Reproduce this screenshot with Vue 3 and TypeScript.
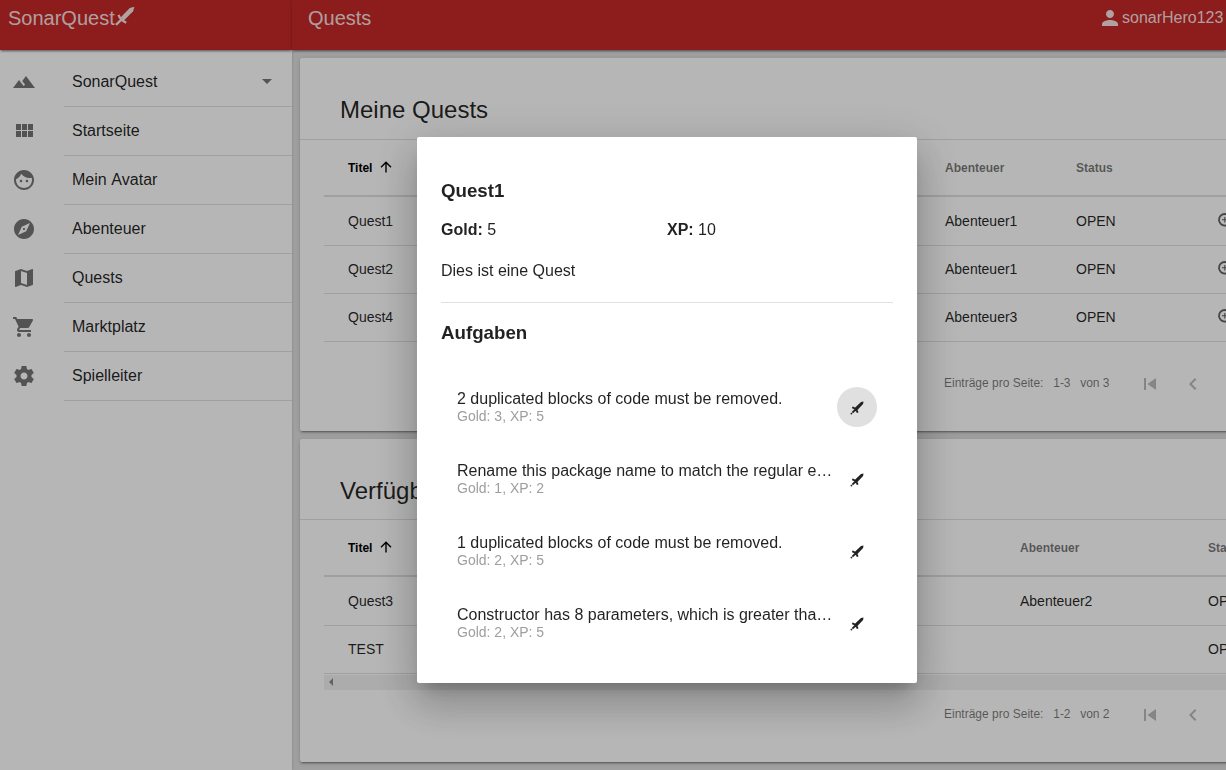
<script setup lang="ts">
interface NavItem { label: string; icon: string; select?: boolean }
interface Quest { title: string; adventure: string; status: string }
interface Task { title: string; gold: number; xp: number }

const nav: NavItem[] = [
  { label: 'SonarQuest', icon: 'M14 6l-3.75 5 2.85 3.8-1.6 1.2C9.81 13.75 7 10 7 10l-6 8h22L14 6z', select: true },
  { label: 'Startseite', icon: 'M4 11h5V5H4v6zm0 7h5v-6H4v6zm6 0h5v-6h-5v6zm6 0h5v-6h-5v6zm-6-7h5V5h-5v6zm6-6v6h5V5h-5z' },
  { label: 'Mein Avatar', icon: 'M9 11.75c-.69 0-1.25.56-1.25 1.25s.56 1.25 1.25 1.25 1.25-.56 1.25-1.25-.56-1.25-1.25-1.25zm6 0c-.69 0-1.25.56-1.25 1.25s.56 1.25 1.25 1.25 1.25-.56 1.25-1.25-.56-1.25-1.25-1.25zM12 2C6.48 2 2 6.48 2 12s4.48 10 10 10 10-4.48 10-10S17.52 2 12 2zm0 18c-4.41 0-8-3.59-8-8 0-.29.02-.58.05-.86 2.36-1.05 4.23-2.98 5.21-5.37C11.07 8.33 14.05 10 17.42 10c.78 0 1.53-.09 2.25-.26.21.71.33 1.47.33 2.26 0 4.41-3.59 8-8 8z' },
  { label: 'Abenteuer', icon: 'M12 10.9c-.61 0-1.1.49-1.1 1.1s.49 1.1 1.1 1.1c.61 0 1.1-.49 1.1-1.1s-.49-1.1-1.1-1.1zM12 2C6.48 2 2 6.48 2 12s4.48 10 10 10 10-4.48 10-10S17.52 2 12 2zm2.19 12.19L6 18l3.81-8.19L18 6l-3.81 8.19z' },
  { label: 'Quests', icon: 'M20.5 3l-.16.03L15 5.1 9 3 3.36 4.9c-.21.07-.36.25-.36.48V20.5c0 .28.22.5.5.5l.16-.03L9 18.9l6 2.1 5.64-1.9c.21-.07.36-.25.36-.48V3.5c0-.28-.22-.5-.5-.5zM15 19l-6-2.11V5l6 2.11V19z' },
  { label: 'Marktplatz', icon: 'M7 18c-1.1 0-1.99.9-1.99 2S5.9 22 7 22s2-.9 2-2-.9-2-2-2zM1 2v2h2l3.6 7.59-1.35 2.45c-.16.28-.25.61-.25.96 0 1.1.9 2 2 2h12v-2H7.42c-.14 0-.25-.11-.25-.25l.03-.12.9-1.63h7.45c.75 0 1.41-.41 1.75-1.03l3.58-6.49c.08-.14.12-.31.12-.48 0-.55-.45-1-1-1H5.21l-.94-2H1zm16 16c-1.1 0-1.99.9-1.99 2s.89 2 1.99 2 2-.9 2-2-.9-2-2-2z' },
  { label: 'Spielleiter', icon: 'M19.43 12.98c.04-.32.07-.64.07-.98s-.03-.66-.07-.98l2.11-1.65c.19-.15.24-.42.12-.64l-2-3.46c-.12-.22-.39-.3-.61-.22l-2.49 1c-.52-.4-1.08-.73-1.69-.98l-.38-2.65C14.46 2.18 14.25 2 14 2h-4c-.25 0-.46.18-.49.42l-.38 2.65c-.61.25-1.17.59-1.69.98l-2.49-1c-.23-.09-.49 0-.61.22l-2 3.46c-.13.22-.07.49.12.64l2.11 1.65c-.04.32-.07.65-.07.98s.03.66.07.98l-2.11 1.65c-.19.15-.24.42-.12.64l2 3.46c.12.22.39.3.61.22l2.49-1c.52.4 1.08.73 1.69.98l.38 2.65c.03.24.24.42.49.42h4c.25 0 .46-.18.49-.42l.38-2.65c.61-.25 1.17-.59 1.69-.98l2.49 1c.23.09.49 0 .61-.22l2-3.46c.12-.22.07-.49-.12-.64l-2.11-1.65zM12 15.5c-1.93 0-3.5-1.57-3.5-3.5s1.57-3.5 3.5-3.5 3.5 1.57 3.5 3.5-1.57 3.5-3.5 3.5z' },
]

const panels: { kind: string; title: string; range: string; total: number; scroll: boolean; rows: Quest[] }[] = [
  {
    kind: 'mine', title: 'Meine Quests', range: '1-3', total: 3, scroll: false,
    rows: [
      { title: 'Quest1', adventure: 'Abenteuer1', status: 'OPEN' },
      { title: 'Quest2', adventure: 'Abenteuer1', status: 'OPEN' },
      { title: 'Quest4', adventure: 'Abenteuer3', status: 'OPEN' },
    ],
  },
  {
    kind: 'available', title: 'Verfügbare Quests', range: '1-2', total: 2, scroll: true,
    rows: [
      { title: 'Quest3', adventure: 'Abenteuer2', status: 'OPEN' },
      { title: 'TEST', adventure: '', status: 'OPEN' },
    ],
  },
]

const tasks: Task[] = [
  { title: '2 duplicated blocks of code must be removed.', gold: 3, xp: 5 },
  { title: 'Rename this package name to match the regular expression', gold: 1, xp: 2 },
  { title: '1 duplicated blocks of code must be removed.', gold: 2, xp: 5 },
  { title: 'Constructor has 8 parameters, which is greater than 7 authorized.', gold: 2, xp: 5 },
]
</script>

<template>
  <div class="app">
    <aside class="side">
      <header class="bar brand">
        <span>SonarQuest</span>
        <svg class="logo" viewBox="0 0 20 20">
          <path d="M19.4 .7L14.8 2 5.8 11.2 9 14.4 18.1 5.3z" />
          <path class="hilt" d="M3.5 8.8Q5.2 13.6 11.2 16.8M6.6 13.4L1 18.8" />
        </svg>
      </header>
      <nav>
        <a v-for="item in nav" :key="item.label" class="nav-item">
          <svg class="icon" viewBox="0 0 24 24"><path :d="item.icon" /></svg>
          <span class="nav-label">{{ item.label }}<i v-if="item.select" class="caret"></i></span>
        </a>
      </nav>
    </aside>

    <main class="main">
      <header class="bar top">
        <span>Quests</span>
        <span class="user">
          <svg class="icon" viewBox="0 0 24 24"><path d="M12 12c2.21 0 4-1.79 4-4s-1.79-4-4-4-4 1.79-4 4 1.79 4 4 4zm0 2c-2.67 0-8 1.34-8 4v2h16v-2c0-2.66-5.33-4-8-4z" /></svg>
          sonarHero123
        </span>
      </header>

      <div class="cards">
        <section v-for="panel in panels" :key="panel.kind" class="card" :class="panel.kind">
          <h2>{{ panel.title }}</h2>
          <div class="table">
            <div class="row head">
              <span class="sorted">Titel
                <svg viewBox="0 0 12 12"><path d="M6 11.5V1.2M1 6.2L6 1.2l5 5" /></svg>
              </span>
              <span>Abenteuer</span>
              <span>Status</span>
            </div>
            <div v-for="row in panel.rows" :key="row.title" class="row">
              <span>{{ row.title }}</span>
              <span>{{ row.adventure }}</span>
              <span>{{ row.status }}</span>
              <svg v-if="panel.kind === 'mine'" class="zoom" viewBox="0 0 18 18"><circle cx="6.8" cy="6.8" r="5.8" /><path d="M11 11l5.5 5.5" /><path class="plus" d="M6.8 4v5.6M4 6.8h5.6" /></svg>
            </div>
          </div>
          <div v-if="panel.scroll" class="scrollbar"><i></i></div>
          <footer class="pager">
            <span class="per">Einträge pro Seite:</span>
            <span class="range">{{ panel.range }}</span>
            <span class="total">von {{ panel.total }}</span>
            <svg class="first" viewBox="0 0 24 24"><path d="M6 6h2v12H6zM18 6v12L9.5 12z" /></svg>
            <svg class="prev" viewBox="0 0 24 24"><path d="M15.41 7.41L14 6l-6 6 6 6 1.41-1.41L10.83 12z" /></svg>
          </footer>
        </section>
      </div>
    </main>

    <div class="backdrop">
      <div class="dialog" role="dialog">
        <h3>Quest1</h3>
        <div class="stats">
          <span><b>Gold:</b> 5</span>
          <span><b>XP:</b> 10</span>
        </div>
        <p>Dies ist eine Quest</p>
        <hr>
        <h3 class="tasks-title">Aufgaben</h3>
        <ul>
          <li v-for="(task, i) in tasks" :key="i">
            <div class="task">
              <div class="task-title">{{ task.title }}</div>
              <div class="reward">Gold: {{ task.gold }}, XP: {{ task.xp }}</div>
            </div>
            <button type="button" :class="{ focused: i === 0 }">
              <svg viewBox="0 0 14 14">
                <path d="M13.5 .5L11 .9 4.1 7.5 6.5 9.9 13.1 3z" />
                <path class="hilt" d="M2.2 6.4L3.7 6.8 7.2 10.3 7.6 11.8M5 9L2.4 11.6" />
                <circle cx="1.4" cy="12.6" r=".9" />
              </svg>
            </button>
          </li>
        </ul>
      </div>
    </div>
  </div>
</template>

<style>
body { margin: 0; overflow: hidden; }
</style>

<style scoped>
* { box-sizing: border-box; }
.app {
  display: flex;
  width: 100vw;
  height: 100vh;
  overflow: hidden;
  background: #e0e0e0;
  color: rgba(0, 0, 0, .87);
  font: 16px/24px "Liberation Sans", Arial, sans-serif;
}
.side {
  position: relative;
  z-index: 1;
  flex: 0 0 292px;
  background: #fff;
  box-shadow: 0 2px 1px -1px rgba(0, 0, 0, .2), 0 1px 1px rgba(0, 0, 0, .14), 0 1px 3px rgba(0, 0, 0, .12);
}
.bar {
  position: relative;
  z-index: 1;
  display: flex;
  height: 50px;
  background: #c62828;
  color: rgba(255, 255, 255, .87);
  font-size: 20px;
  line-height: 36px;
  box-shadow: 0 2px 2px -1px rgba(0, 0, 0, .4), 0 1px 3px rgba(0, 0, 0, .2);
}
.brand { padding-left: 8px; }
.logo { width: 20px; height: 20px; margin-top: 6px; fill: currentColor; }
.logo .hilt { fill: none; stroke: currentColor; stroke-width: 2.3; }
.top { padding: 0 2.6px 0 16px; justify-content: space-between; }
.user { display: flex; font-size: 16px; }
.user .icon { width: 24px; height: 24px; margin: 6px .4px 0 0; fill: currentColor; }
nav { padding-top: 8px; }
.nav-item { display: flex; height: 49px; }
.icon { flex: none; width: 24px; height: 24px; margin: 12px 28px 0 12px; fill: #757575; }
.nav-label {
  display: flex;
  flex: 1;
  align-items: center;
  justify-content: space-between;
  padding: 0 20px 1px 8px;
  border-bottom: 1px solid #e0e0e0;
  font-kerning: none;
}
.caret { border: 5px solid transparent; border-top-color: #757575; border-bottom: 0; }
.main { flex: 1; min-width: 0; }
.cards { display: flex; flex-direction: column; gap: 8px; padding: 8px 0 8px 8px; }
.card {
  width: 980px;
  border-radius: 2px;
  background: #fff;
  box-shadow: 0 3px 1px -2px rgba(0, 0, 0, .2), 0 2px 2px rgba(0, 0, 0, .14), 0 1px 5px rgba(0, 0, 0, .12);
}
.mine { height: 373px; }
.available { height: 323px; }
h2 {
  height: 82px;
  margin: 0;
  padding: 36px 40px 0;
  border-bottom: 1px solid #e0e0e0;
  font-size: 24px;
  font-weight: 400;
  line-height: 32px;
}
.available h2 { height: 81px; }
.table { margin-left: 24px; }
.row {
  display: grid;
  grid-template-columns: 597px 131px 140px 20px;
  align-items: center;
  height: 48px;
  padding: 0 0 1px 24px;
  border-bottom: 1px solid #e0e0e0;
  font-size: 14px;
}
.available .row { grid-template-columns: 672px 188px 60px; }
.row.head {
  height: 57px;
  padding: 1px 0 0 24px;
  border-bottom-width: 2px;
  color: rgba(0, 0, 0, .54);
  font-size: 12px;
  font-weight: 700;
}
.head + .row { height: 49px; }
.sorted { display: flex; align-items: center; color: #000; }
.sorted svg { width: 12px; height: 12px; margin: -2px 0 0 7.8px; fill: none; stroke: currentColor; stroke-width: 1.4; }
.zoom { width: 18px; height: 18px; margin: 1px 0 0 2px; fill: none; stroke: #616161; stroke-width: 1.8; }
.head + .row .zoom { margin-top: 2px; }
.zoom .plus { stroke-width: 1.1; }
.scrollbar { display: flex; align-items: center; height: 15px; margin: 1px 0 0 24px; padding: 0 0 1px 5px; background: #f1f1f1; }
.scrollbar i { border: 4px solid transparent; border-right-color: #8c8c8c; border-left: 0; }
.pager {
  display: flex;
  align-items: center;
  height: 56px;
  margin-top: 13px;
  padding-left: 644px;
  color: rgba(0, 0, 0, .54);
  font-size: 12px;
}
.available .pager { height: 48px; margin-top: 0; }
.range { margin: 0 9.6px 0 9.8px; }
.pager svg { width: 24px; height: 24px; margin-top: 2px; fill: #bbb; }
.pager .first { margin-left: 28px; }
.pager .prev { margin-left: 19px; }
.backdrop {
  position: fixed;
  inset: 0;
  z-index: 5;
  display: flex;
  justify-content: center;
  align-items: flex-start;
  padding: 137px 0 0 108px;
  background: rgba(0, 0, 0, .288);
}
.dialog {
  width: 500px;
  height: 546px;
  padding: 42px 24px 0;
  border-radius: 2px;
  background: #fff;
  box-shadow: 0 11px 15px -7px rgba(0, 0, 0, .2), 0 24px 38px 3px rgba(0, 0, 0, .14), 0 9px 46px 8px rgba(0, 0, 0, .12);
}
h3 { margin: 0; font-size: 18.72px; line-height: 24px; }
.stats { display: grid; grid-template-columns: 1fr 1fr; margin-top: 15px; }
p { margin: 17px 0 0; }
hr { margin: 19px 0 0; border: 0; border-top: 1px solid #e0e0e0; }
.tasks-title { margin-top: 18px; }
ul { margin: 26px 0 0; padding: 0; list-style: none; }
li { display: flex; align-items: center; height: 72px; padding: 0 16px; }
.task { flex: 1; min-width: 0; }
.task-title { overflow: hidden; margin-top: 1px; line-height: 18px; text-overflow: ellipsis; white-space: nowrap; }
.reward { margin-top: -1px; color: #9e9e9e; font-size: 14px; line-height: 18px; }
button {
  display: grid;
  place-items: center;
  flex: none;
  width: 40px;
  height: 40px;
  padding: 0;
  border: 0;
  border-radius: 50%;
  background: none;
}
button.focused { background: #e0e0e0; }
button svg { width: 14px; height: 14px; margin-top: 1px; fill: #212121; }
button .hilt { fill: none; stroke: #212121; stroke-width: 1.8; }
</style>
